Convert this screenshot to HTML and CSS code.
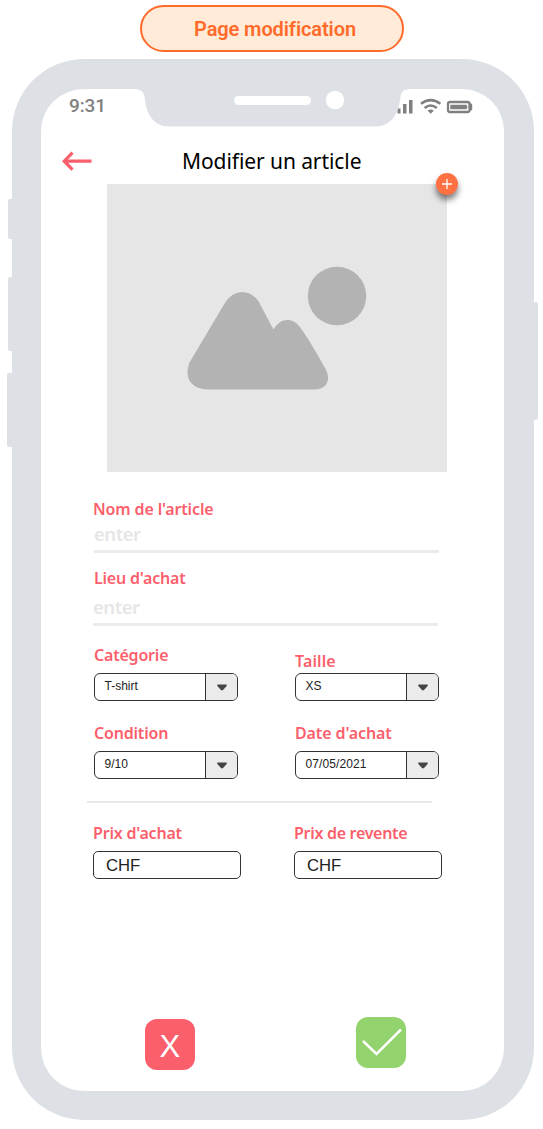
FILE: index.html
```html
<!DOCTYPE html>
<html lang="fr">
<head>
<meta charset="utf-8">
<title>Modifier un article</title>
<link rel="stylesheet" href="styles.css">
</head>
<body>
<div class="page-tag">Page modification</div>
<main class="phone">
  <i class="side-key mute"></i><i class="side-key vol-up"></i><i class="side-key vol-down"></i><i class="side-key power"></i>
  <svg class="notch" width="272" height="38" viewBox="0 0 272 38">
    <path fill="#dde1e6" d="M0 0V.500C5 .500 7 4 8 10C9 25 17 37.500 32 37.500H239C252 37.500 261 27 263 11C264 4 265 .500 271 .500V0Z"/>
    <rect x="97" y="7" width="77" height="9" rx="4.500" fill="#fff"/>
    <circle cx="198" cy="11" r="9.200" fill="#fff"/>
  </svg>
  <div class="status">
    <span class="clock">9:31</span>
    <svg class="signals" width="78" height="16" viewBox="0 0 78 16">
      <path fill="#808080" d="M.500 10.500H3.500V15.500H.500ZM6 6H9.500V15.500H6ZM12 2H15.500V15.500H12Z"/>
      <g fill="none" stroke="#808080" stroke-width="2.600"><path d="M24 5.800Q33.700-1.700 43.400 5.800"/><path d="M27.600 10Q33.700 5 39.800 10"/></g>
      <path fill="#808080" d="M30.500 12.500Q33.700 10.300 36.900 12.500L33.700 15.800Z"/>
      <rect x="51" y="4" width="21.500" height="10" rx="2" fill="none" stroke="#808080" stroke-width="2.300"/>
      <path fill="#808080" d="M53.300 6.800H69.500L70.500 9L69.500 11.200H53.300ZM72 5.500H74Q75.200 5.500 75.200 6.500V11.500Q75.200 12.500 74 12.500H72Z"/>
    </svg>
  </div>
  <header class="header">
    <svg class="back" width="30" height="20" viewBox="0 0 30 20"><path d="M10.500 1.700 2.200 10.200l8.300 8.500M2 10.200H29.500" fill="none" stroke="#fb5f6c" stroke-width="3.200"/></svg>
    <h1 class="title">Modifier un article</h1>
  </header>
  <div class="photo">
    <svg width="340" height="288" viewBox="0 0 340 288">
      <path fill="#b3b3b3" d="M82.500 178.500 118.500 118C127.500 104.500 143 104.500 152 118C156 126 161 135 166.500 145.500C173.500 133 186 133.500 192.500 142.500C201 154 210 169.500 218 184C225 196 219.500 205 208 205.500H101C83 205 77 193 82.500 178.500Z"/>
      <circle cx="230" cy="112" r="29.200" fill="#b3b3b3"/>
    </svg>
    <button class="add" aria-label="Ajouter"><svg width="12" height="12" viewBox="0 0 12 12"><path d="M6 1V11M1 6H11" stroke="#fff" stroke-width="1.300"/></svg></button>
  </div>
  <form class="form">
    <label class="field name"><span class="label l-name">Nom de l'article</span><span class="hint">enter</span></label>
    <label class="field place"><span class="label l-place">Lieu d'achat</span><span class="hint">enter</span></label>
    <div class="pair">
      <div class="cell"><span class="label l-cat">Catégorie</span><div class="select"><span>T-shirt</span><b><svg width="12" height="7" viewBox="0 0 12 7"><path d="M1.500 .500H10.500Q11.500 1.500 10 2.700L7 6Q6 6.800 5 6L2 2.700Q.500 1.500 1.500 .500Z"/></svg></b></div></div>
      <div class="cell"><span class="label l-size">Taille</span><div class="select"><span>XS</span><b><svg width="12" height="7" viewBox="0 0 12 7"><path d="M1.500 .500H10.500Q11.500 1.500 10 2.700L7 6Q6 6.800 5 6L2 2.700Q.500 1.500 1.500 .500Z"/></svg></b></div></div>
    </div>
    <div class="pair">
      <div class="cell"><span class="label l-cond">Condition</span><div class="select"><span>9/10</span><b><svg width="12" height="7" viewBox="0 0 12 7"><path d="M1.500 .500H10.500Q11.500 1.500 10 2.700L7 6Q6 6.800 5 6L2 2.700Q.500 1.500 1.500 .500Z"/></svg></b></div></div>
      <div class="cell"><span class="label l-date">Date d'achat</span><div class="select date"><span>07/05/2021</span><b><svg width="12" height="7" viewBox="0 0 12 7"><path d="M1.500 .500H10.500Q11.500 1.500 10 2.700L7 6Q6 6.800 5 6L2 2.700Q.500 1.500 1.500 .500Z"/></svg></b></div></div>
    </div>
    <div class="rule"></div>
    <div class="pair prices">
      <div class="cell"><span class="label l-buy">Prix d'achat</span><div class="price">CHF</div></div>
      <div class="cell"><span class="label l-sell">Prix de revente</span><div class="price">CHF</div></div>
    </div>
  </form>
  <footer class="actions">
    <button class="action cancel">X</button>
    <button class="action confirm" aria-label="Valider"><svg width="50" height="50" viewBox="0 0 50 50"><path d="M7 23 20.500 36 45 11.500" fill="none" stroke="#fff" stroke-width="2.500"/></svg></button>
  </footer>
</main>
</body>
</html>
```
FILE: styles.css
```css
* { box-sizing: border-box; }
body { margin: 0; padding-top: 5px; width: 543px; height: 1129px; overflow: hidden; background: #fff; }
button { border: 0; padding: 0; }
svg { display: block; }

.page-tag {
  width: 264px; height: 47px; margin-left: 139.500px; padding: 1px 0 0 7px;
  border: 2.5px solid #ff6a2b; border-radius: 24px; background: #ffebd7;
  color: #ff6a2b; font: 600 20px/43px Roboto, sans-serif; letter-spacing: -.1px; text-align: center; white-space: nowrap;
}

.phone {
  position: relative; width: 522px; height: 1061px; margin: 7px 0 0 12px;
  border: solid #dde1e6; border-width: 30px 30px 29px 29px; border-radius: 72px; background: #fff;
}
.side-key { position: absolute; background: #dde1e6; }
.mute { left: -33px; top: 110px; width: 5px; height: 40px; border-radius: 2px 0 0 2px; }
.vol-up { left: -33px; top: 188px; width: 5px; height: 74px; border-radius: 2px 0 0 2px; }
.vol-down { left: -34.500px; top: 284px; width: 6px; height: 74px; border-radius: 2px 0 0 2px; }
.power { right: -34px; top: 213px; width: 5px; height: 118px; border-radius: 0 2px 2px 0; }
.notch { position: absolute; left: 96px; top: 0; }

.status { display: flex; justify-content: space-between; height: 41px; padding: 0 29px 0 28px; }
.clock { color: #808080; font: 500 19px/22px Roboto, sans-serif; letter-spacing: -.1px; padding-top: 6px; }
.signals { margin-top: 9px; }

.header { display: flex; align-items: center; height: 54px; padding: 8px 0 0 21px; }
.title { margin: 0 0 0 90px; font: 400 21px/30px "Noto Sans", sans-serif; letter-spacing: -.08px; color: #000; white-space: nowrap; }

.photo { position: relative; width: 340px; height: 288px; margin-left: 65.5px; background: #e6e6e6; }
.add {
  position: absolute; right: -11px; top: -11px; display: grid; place-items: center;
  width: 22px; height: 22px; border-radius: 50%; background: #ff7043; box-shadow: 0 5px 6px rgba(0, 0, 0, .5);
}

.form { padding: 27px 0 0 53px; height: 442px; }
.field { display: flex; flex-direction: column; width: 345px; border-bottom: 3px solid #ebebeb; }
.name { height: 54px; }
.place { height: 58px; margin: 15px 0 0 -1px; }
.label { height: 20px; font: 600 16px/20px "Noto Sans", sans-serif; letter-spacing: -.2px; color: #fb5f6c; white-space: nowrap; }
.hint { margin-top: 3px; color: #e6e6e6; font: 600 18.5px/24px "Noto Sans", sans-serif; letter-spacing: -.5px; }
.place .hint { margin-top: 7px; }
.l-name { margin-left: -1px; letter-spacing: -.14px; }
.l-place { margin-left: 1px; }

.pair { display: flex; gap: 57px; margin-top: 19px; height: 56px; }
.pair + .pair { margin-top: 22px; }
.cell { display: flex; flex-direction: column; width: 144px; justify-content: space-between; }
.l-size { margin-top: 6px; letter-spacing: .1px; }
.l-date { letter-spacing: -.1px; }
.l-sell { letter-spacing: -.3px; }
.select {
  display: flex; justify-content: space-between; height: 28px; overflow: hidden;
  border: 1.500px solid #333; border-radius: 6px; font: 12px/24px "Liberation Sans", sans-serif; color: #222;
}
.select span { padding-left: 9.500px; }
.date { letter-spacing: .1px; }
.select b { display: grid; place-items: center; width: 32px; background: #ebebeb; border-left: 1.500px solid #333; fill: #444; }
.rule { width: 345px; height: 2px; margin: 22px 0 0 -7px; background: #e9e9e9; }
.prices { margin: 20px 0 0 -1px; gap: 53px; }
.prices .cell { width: 148px; }
.price { height: 28px; padding-left: 12px; border: 1.500px solid #333; border-radius: 5px; font: 16.700px/27px "Liberation Sans", sans-serif; color: #222; }

.actions { display: flex; justify-content: space-between; align-items: flex-start; padding: 103px 98px 0 103.500px; }
.action { width: 50.500px; height: 51px; border-radius: 12px; }
.cancel { margin-top: 2px; background: #fb5f6c; color: #fff; font: 31px/55px "Liberation Sans", sans-serif; }
.confirm { background: #93d36d; }
```
